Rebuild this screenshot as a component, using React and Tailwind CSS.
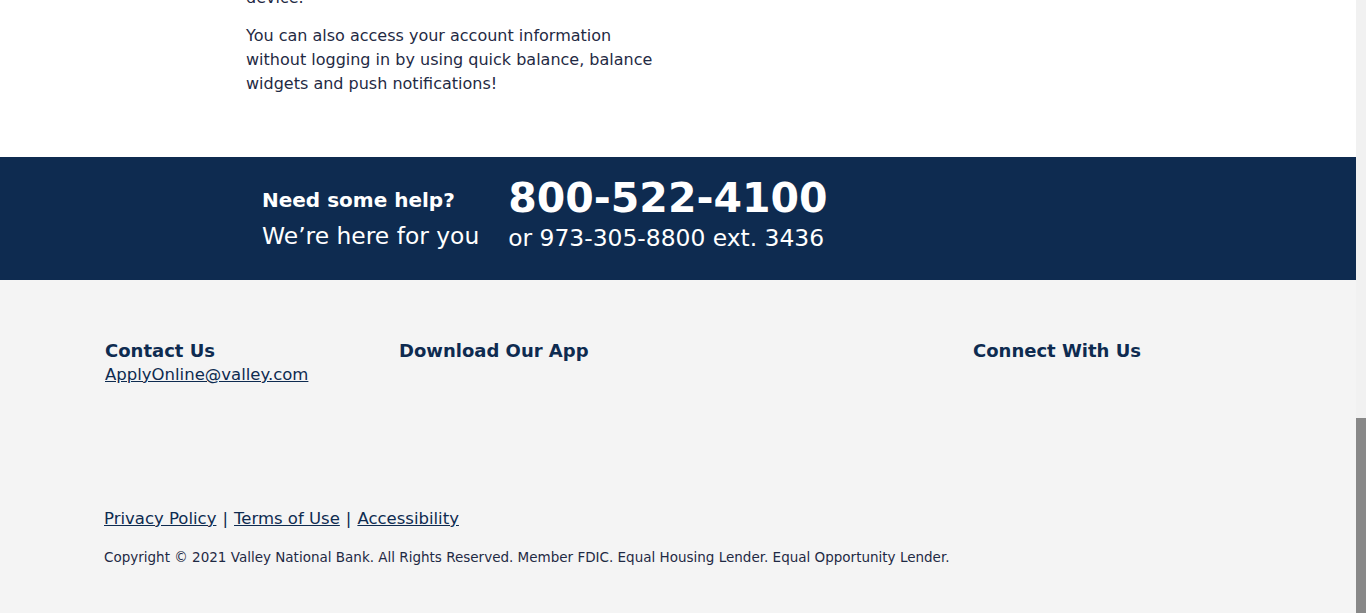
export default function App() {
  const font = { fontFamily: '"DejaVu Sans", "Open Sans", sans-serif' };
  return (
    <div className="flex w-[1366px] h-[613px] overflow-hidden" style={font}>
      <div className="flex-1 flex flex-col min-w-0">
        <div className="bg-white h-[157px] flex flex-col pl-[246px]">
          <p className="text-[16px] leading-[24px] text-[#1f2a44] mt-[-14px]">device.</p>
          <p className="mt-[14px] w-[412px] text-[16px] leading-[24px] text-[#1f2a44]">
            You can also access your account information without logging in by using quick balance, balance widgets and push notifications!
          </p>
        </div>
        <div className="bg-[#0e2b50] h-[123px] flex items-center pl-[262px] text-white">
          <div className="flex flex-col">
            <span className="text-[20px] font-bold leading-[26px]">Need some help?</span>
            <span className="text-[23.4px] leading-[30px] mt-[8px]">We’re here for you</span>
          </div>
          <div className="flex flex-col ml-[29px] mb-[13px]">
            <span className="text-[41px] font-semibold leading-[50px]">800-522-4100</span>
            <span className="text-[23.4px] leading-[28px] mt-[1px]">or 973-305-8800 ext. 3436</span>
          </div>
        </div>
        <div className="flex-1 bg-[#f4f4f4] flex flex-col pl-[104px]">
          <div className="flex mt-[57px] text-[#0e2b50] pl-[1px]">
            <div className="w-[294px] flex flex-col">
              <span className="text-[18px] font-semibold leading-[28px]">Contact Us</span>
              <a href="#" className="text-[16.5px] font-medium underline leading-[20px]">ApplyOnline@valley.com</a>
            </div>
            <div className="w-[574px]">
              <span className="text-[18px] font-semibold leading-[28px]">Download Our App</span>
            </div>
            <div>
              <span className="text-[18px] font-semibold leading-[28px]">Connect With Us</span>
            </div>
          </div>
          <div className="flex items-center mt-[123px] text-[16.5px] font-medium text-[#0e2b50] leading-[22px]">
            <a href="#" className="underline">Privacy Policy</a>
            <span className="mx-[6px]">|</span>
            <a href="#" className="underline">Terms of Use</a>
            <span className="mx-[6px]">|</span>
            <a href="#" className="underline">Accessibility</a>
          </div>
          <p className="mt-[17px] text-[13.5px] leading-[20px] text-[#1f2a44]">
            Copyright © 2021 Valley National Bank. All Rights Reserved. Member FDIC. Equal Housing Lender. Equal Opportunity Lender.
          </p>
        </div>
      </div>
      <div className="w-[10px] bg-[#f1f1f1] flex flex-col">
        <div className="flex-1" />
        <div className="h-[195px] bg-[#888888]" />
      </div>
    </div>
  );
}
